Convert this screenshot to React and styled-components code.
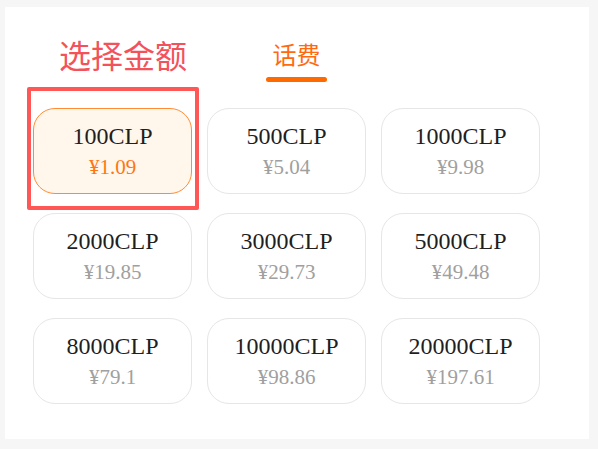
import React from 'react'
import styled, { createGlobalStyle } from 'styled-components'

const GlobalStyle = createGlobalStyle`
  html, body {
    margin: 0;
    padding: 0;
    background: #f6f6f6;
  }
`

const items = [
  { amount: '100CLP', price: '¥1.09' },
  { amount: '500CLP', price: '¥5.04' },
  { amount: '1000CLP', price: '¥9.98' },
  { amount: '2000CLP', price: '¥19.85' },
  { amount: '3000CLP', price: '¥29.73' },
  { amount: '5000CLP', price: '¥49.48' },
  { amount: '8000CLP', price: '¥79.1' },
  { amount: '10000CLP', price: '¥98.86' },
  { amount: '20000CLP', price: '¥197.61' },
]

const App = () => {
  const selected = 0
  return (
    <Page>
      <GlobalStyle />
      <Panel>
        <Header>
          <Title>选择金额</Title>
          <Tab>
            <TabLabel>话费</TabLabel>
            <TabBar />
          </Tab>
        </Header>
        <Grid>
          {items.map((item, index) => {
            const active = index === selected
            return (
              <Card key={item.amount} $active={active}>
                <Amount>{item.amount}</Amount>
                <Price $active={active}>{item.price}</Price>
                {active && <Marker />}
              </Card>
            )
          })}
        </Grid>
      </Panel>
    </Page>
  )
}

const Page = styled.div`
  width: 598px;
  height: 449px;
  box-sizing: border-box;
  padding: 7px 9px 10px 5px;
`

const Panel = styled.main`
  height: 100%;
  background: #ffffff;
  box-sizing: border-box;
  padding: 31px 0 0 28px;
`

const Header = styled.div`
  display: flex;
  align-items: flex-start;
  padding-left: 26px;
`

const Title = styled.h2`
  margin: 0;
  font-family: 'Noto Sans CJK SC', sans-serif;
  font-weight: 400;
  font-size: 32px;
  line-height: 32px;
  color: #f4525a;
`

const Tab = styled.div`
  display: flex;
  flex-direction: column;
  align-items: center;
  width: 61px;
  margin-left: 79px;
  padding-top: 4px;
`

const TabLabel = styled.span`
  font-family: 'Noto Sans CJK SC', sans-serif;
  font-size: 24px;
  line-height: 24px;
  color: #ff6a0e;
`

const TabBar = styled.div`
  width: 61px;
  height: 5px;
  margin-top: 11px;
  border-radius: 3px;
  background: #ff6a00;
`

const Grid = styled.div`
  display: grid;
  grid-template-columns: repeat(3, 159px);
  column-gap: 15px;
  row-gap: 19px;
  margin-top: 26px;
`

const Card = styled.div`
  position: relative;
  height: 86px;
  box-sizing: border-box;
  display: flex;
  flex-direction: column;
  align-items: center;
  justify-content: center;
  gap: 5px;
  border-radius: 22px;
  border: 1px solid ${(p) => (p.$active ? '#ff8c34' : '#e6e6e6')};
  background: ${(p) => (p.$active ? '#fff7ec' : '#ffffff')};
  font-family: 'Liberation Serif', serif;
`

const Amount = styled.div`
  font-size: 24px;
  line-height: 28px;
  color: #1f1f1f;
`

const Price = styled.div`
  font-size: 21px;
  line-height: 25px;
  color: ${(p) => (p.$active ? '#ff7512' : '#a0a0a0')};
`

const Marker = styled.div`
  position: absolute;
  left: -7px;
  top: -22px;
  right: -8px;
  bottom: -17px;
  border: 4px solid #ff5656;
  border-radius: 2px;
  pointer-events: none;
`

export default App
